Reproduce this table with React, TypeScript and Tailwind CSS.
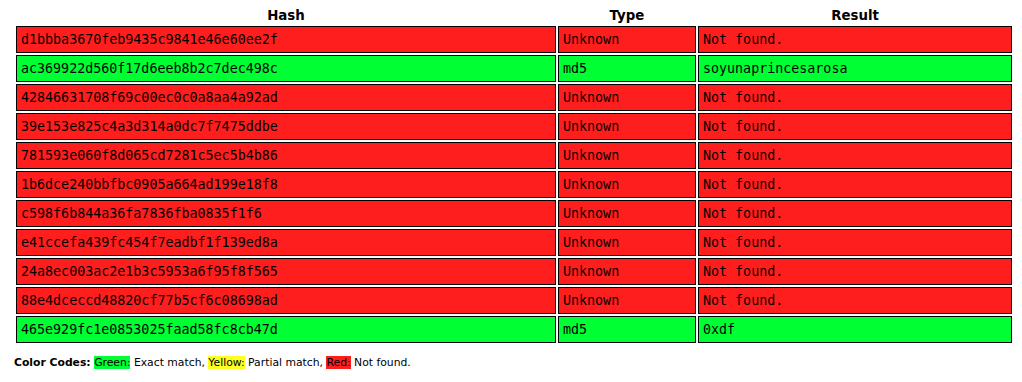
const rows: { hash: string; type: string; result: string; found: boolean }[] = [
  { hash: "d1bbba3670feb9435c9841e46e60ee2f", type: "Unknown", result: "Not found.", found: false },
  { hash: "ac369922d560f17d6eeb8b2c7dec498c", type: "md5", result: "soyunaprincesarosa", found: true },
  { hash: "42846631708f69c00ec0c0a8aa4a92ad", type: "Unknown", result: "Not found.", found: false },
  { hash: "39e153e825c4a3d314a0dc7f7475ddbe", type: "Unknown", result: "Not found.", found: false },
  { hash: "781593e060f8d065cd7281c5ec5b4b86", type: "Unknown", result: "Not found.", found: false },
  { hash: "1b6dce240bbfbc0905a664ad199e18f8", type: "Unknown", result: "Not found.", found: false },
  { hash: "c598f6b844a36fa7836fba0835f1f6", type: "Unknown", result: "Not found.", found: false },
  { hash: "e41ccefa439fc454f7eadbf1f139ed8a", type: "Unknown", result: "Not found.", found: false },
  { hash: "24a8ec003ac2e1b3c5953a6f95f8f565", type: "Unknown", result: "Not found.", found: false },
  { hash: "88e4dceccd48820cf77b5cf6c08698ad", type: "Unknown", result: "Not found.", found: false },
  { hash: "465e929fc1e0853025faad58fc8cb47d", type: "md5", result: "0xdf", found: true },
];

export default function App() {
  return (
    <div className="min-h-screen bg-white text-black px-[14px] font-['DejaVu_Sans',sans-serif]">
      {/* Results table */}
      <table className="w-[1000px] border-separate border-spacing-[2px] table-fixed">
        <thead>
          <tr>
            <th className="w-[540px] h-[22px] pt-[6px] pb-[1px] leading-[15px] text-[13.33px] font-bold text-center">Hash</th>
            <th className="w-[138px] h-[22px] pt-[6px] pb-[1px] leading-[15px] text-[13.33px] font-bold text-center">Type</th>
            <th className="w-[314px] h-[22px] pt-[6px] pb-[1px] leading-[15px] text-[13.33px] font-bold text-center">Result</th>
          </tr>
        </thead>
        <tbody className="font-['DejaVu_Sans_Mono',monospace] text-[13.33px] leading-[15px]">
          {rows.map((r) => {
            const bg = r.found ? "bg-[#00ff33]" : "bg-[#ff1e1e]";
            return (
              <tr key={r.hash}>
                <td className={`${bg} border border-black pl-[4px] py-[5px] whitespace-nowrap`}>{r.hash}</td>
                <td className={`${bg} border border-black pl-[4px] py-[5px] whitespace-nowrap`}>{r.type}</td>
                <td className={`${bg} border border-black pl-[4px] py-[5px] whitespace-nowrap`}>{r.result}</td>
              </tr>
            );
          })}
        </tbody>
      </table>

      {/* Legend */}
      <p className="mt-[11px] text-[10.8px] leading-[13px]">
        <b>Color Codes:</b> <span className="bg-[#00ff33]">Green:</span> Exact match,{" "}
        <span className="bg-[#ffff20]">Yellow:</span> Partial match,{" "}
        <span className="bg-[#ff1e1e]">Red:</span> Not found.
      </p>
    </div>
  );
}
